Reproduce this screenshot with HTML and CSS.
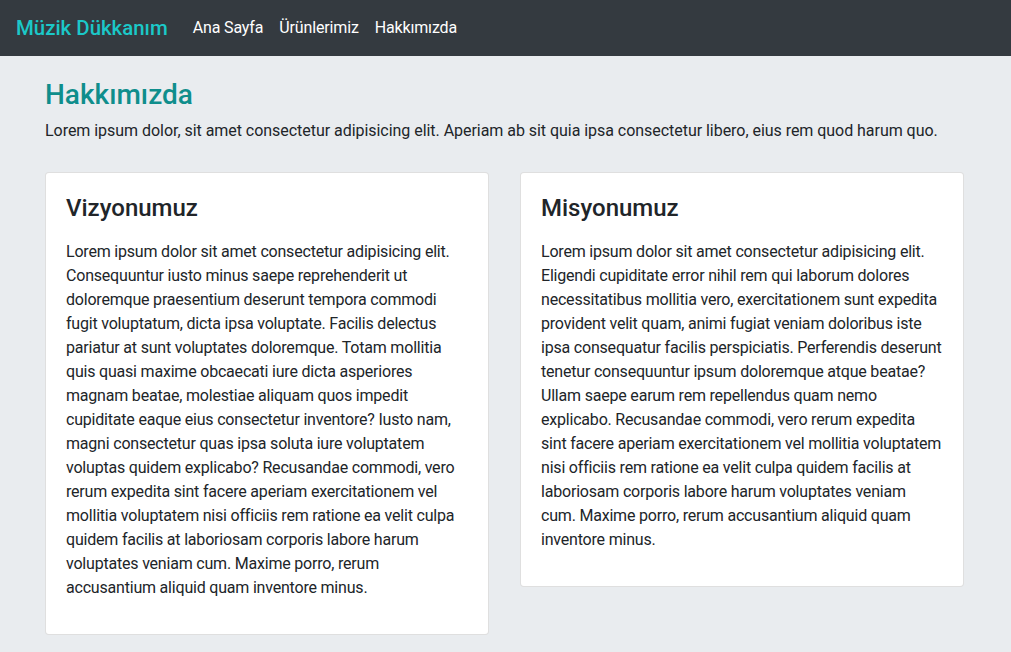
FILE: index.html
```html
<!DOCTYPE html>
<html lang="tr">
<head>
<meta charset="utf-8">
<title>Hakkımızda - Müzik Dükkanım</title>
<link rel="stylesheet" href="styles.css">
</head>
<body>
<nav class="navbar">
  <a class="brand" href="#">Müzik Dükkanım</a>
  <ul class="nav">
    <li><a class="nav-link" href="#">Ana Sayfa</a></li>
    <li><a class="nav-link" href="#">Ürünlerimiz</a></li>
    <li><a class="nav-link" href="#">Hakkımızda</a></li>
  </ul>
</nav>
<main class="container">
  <h1 class="page-title">Hakkımızda</h1>
  <p class="lead">Lorem ipsum dolor, sit amet consectetur adipisicing elit. Aperiam ab sit quia ipsa consectetur libero, eius rem quod harum quo.</p>
  <div class="row">
    <section class="card">
      <h2 class="card-title">Vizyonumuz</h2>
      <p class="card-text">Lorem ipsum dolor sit amet consectetur adipisicing elit. Consequuntur iusto minus saepe reprehenderit ut doloremque praesentium deserunt tempora commodi fugit voluptatum, dicta ipsa voluptate. Facilis delectus pariatur at sunt voluptates doloremque. Totam mollitia quis quasi maxime obcaecati iure dicta asperiores magnam beatae, molestiae aliquam quos impedit cupiditate eaque eius consectetur inventore? Iusto nam, magni consectetur quas ipsa soluta iure voluptatem voluptas quidem explicabo? Recusandae commodi, vero rerum expedita sint facere aperiam exercitationem vel mollitia voluptatem nisi officiis rem ratione ea velit culpa quidem facilis at laboriosam corporis labore harum voluptates veniam cum. Maxime porro, rerum accusantium aliquid quam inventore minus.</p>
    </section>
    <section class="card">
      <h2 class="card-title">Misyonumuz</h2>
      <p class="card-text">Lorem ipsum dolor sit amet consectetur adipisicing elit. Eligendi cupiditate error nihil rem qui laborum dolores necessitatibus mollitia vero, exercitationem sunt expedita provident velit quam, animi fugiat veniam doloribus iste ipsa consequatur facilis perspiciatis. Perferendis deserunt tenetur consequuntur ipsum doloremque atque beatae? Ullam saepe earum rem repellendus quam nemo explicabo. Recusandae commodi, vero rerum expedita sint facere aperiam exercitationem vel mollitia voluptatem nisi officiis rem ratione ea velit culpa quidem facilis at laboriosam corporis labore harum voluptates veniam cum. Maxime porro, rerum accusantium aliquid quam inventore minus.</p>
    </section>
  </div>
</main>
</body>
</html>
```
FILE: styles.css
```css
* { box-sizing: border-box; }
html, body { margin: 0; }
body {
  background: #e9ecef;
  color: #212529;
  font-family: Roboto, "Open Sans", sans-serif;
  font-size: 16px;
  line-height: 1.5;
  letter-spacing: -0.2px;
  min-height: 652px;
}
a { text-decoration: none; }

.navbar {
  height: 56px;
  background: #343a40;
  display: flex;
  align-items: center;
  padding: 0 16px;
}
.brand {
  color: #1bc8c8;
  font-size: 20.4px;
  font-weight: 500;
  letter-spacing: 0;
  margin-right: 17px;
}
.nav {
  list-style: none;
  margin: 0;
  padding: 0;
  display: flex;
  letter-spacing: -0.15px;
}
.nav-link {
  display: block;
  color: #ffffff;
  padding: 8px;
}

.container {
  padding: 22px 47px 0 45px;
}
.page-title {
  margin: 0 0 7px;
  font-size: 28px;
  font-weight: 500;
  line-height: 1.2;
  letter-spacing: 0;
  color: #0f8e8c;
}
.lead {
  margin: 0 0 29px;
  letter-spacing: -0.04px;
}

.row {
  display: flex;
  align-items: flex-start;
  gap: 31px;
}
.card {
  flex: 1 1 0;
  background: #fff;
  border: 1px solid rgba(0,0,0,.125);
  border-radius: 4px;
  padding: 21px 20px 18px;
}
.card-title {
  margin: 0 0 18px;
  font-size: 24px;
  font-weight: 500;
  line-height: 1.2;
  letter-spacing: 0;
}
.card-text {
  margin: 0 0 16px;
}
```
